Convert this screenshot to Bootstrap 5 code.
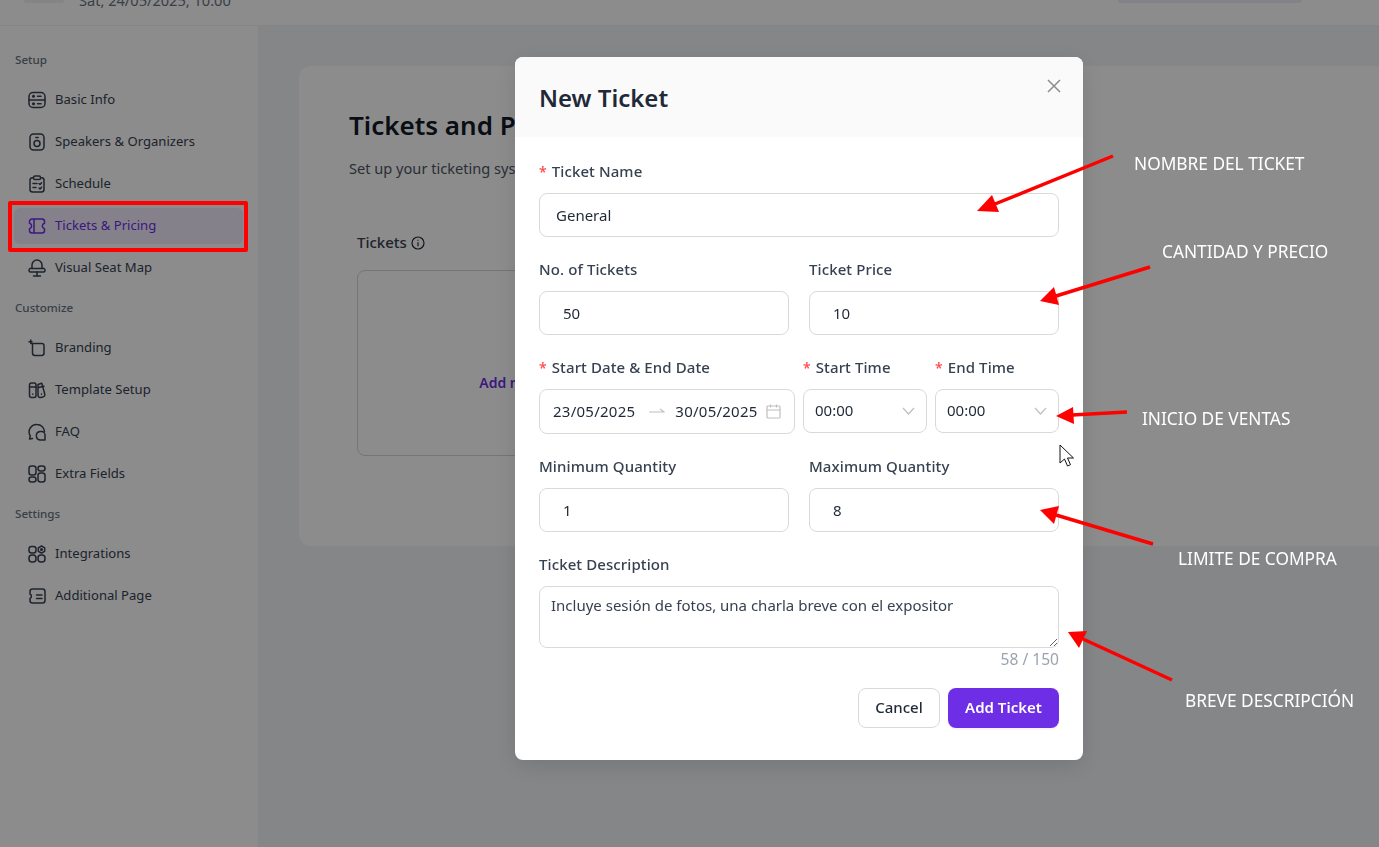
<!DOCTYPE html>
<html lang="en">
<head>
  <meta charset="UTF-8"/>
  <title>New Ticket</title>
  <link rel="stylesheet" href="https://cdn.jsdelivr.net/npm/bootstrap@5.3.0/dist/css/bootstrap.min.css"/>
  <style>
    html, body { height: 100%; overflow: hidden; }
    body { font-family: "Noto Sans", "Open Sans", sans-serif; background: #f2f4f7; color: #1f2937; }
    .app-top { height: 26px; background: #fff; border-bottom: 1px solid #f0f0f0; overflow: hidden; position: relative; }
    .app-date { margin: -11px 0 0 15px; font-size: 14.6px; color: #6b7280; line-height: 22px; }
    .app-avatar { width: 40px; height: 3px; margin-left: 24px; background: #f0f0f0; border-radius: 0 0 6px 6px; }
    .app-action { width: 184px; height: 3px; background: #f0ebfc; border-radius: 0 0 8px 8px; margin-right: 77px; }
    .app-body { height: 821px; }
    .side-col { width: 258px; background: #fff; padding: 24px 15px 0; flex-shrink: 0; }
    .side-head { font-size: 11.6px; line-height: 20px; font-weight: 500; color: #6b7280; margin-bottom: 12px; }
    .side-link { height: 36px; margin: 0 0 6px -1px; width: 229px; padding-left: 14px; border-radius: 6px; display: flex; align-items: center; gap: 9px; color: #374151; font-size: 13.1px; text-decoration: none; }
    .side-link svg { width: 18px; height: 18px; flex-shrink: 0; fill: none; stroke: currentColor; stroke-width: 1.5; stroke-linecap: round; stroke-linejoin: round; }
    .side-link.is-active { background: #f1ebfd; color: #6d2ee6; }
    .side-next { margin-top: 12px; }
    .main-col { flex: 1; padding: 40px 0 0 41px; min-width: 0; }
    .main-panel { height: 480px; background: #fff; border-radius: 12px 0 0 12px; padding: 42px 50px; }
    .main-title { font-size: 26px; font-weight: 600; line-height: 34px; color: #111827; margin: 0 0 16px; }
    .main-sub { font-size: 14.6px; color: #4b5563; margin: 0 0 54px; line-height: 20px; }
    .main-tickets { margin-left: 8px; }
    .main-label { font-size: 15px; font-weight: 500; color: #374151; line-height: 20px; margin-bottom: 18px; }
    .main-label svg { width: 14px; height: 14px; vertical-align: -2px; fill: none; stroke: #1f2937; stroke-width: 1.2; }
    .main-box { width: 346px; height: 186px; border: 1px solid #d1d5db; border-radius: 8px; text-align: center; padding-top: 101px; font-size: 14px; font-weight: 600; color: #6d2ee6; }
    .dim-layer { position: fixed; inset: 0; background: rgba(0, 0, 0, .45); }
    .ticket-modal { position: fixed; top: 57px; left: 515px; width: 568px; height: 703px; background: #fff; border: 0; border-radius: 8px; overflow: hidden; box-shadow: 0 6px 24px rgba(0,0,0,.12); }
    .ticket-modal .modal-header { height: 80px; padding: 2px 24px 0; background: #fafafa; border: 0; border-radius: 0; align-items: center; }
    .ticket-modal .modal-title { font-size: 24px; font-weight: 600; color: #1f2937; line-height: 32px; }
    .modal-x { position: absolute; top: 21px; right: 21px; width: 16px; height: 16px; padding: 0; border: 0; background: none; display: flex; }
    .ticket-modal .modal-body { padding: 24px 24px 0; }
    .fld-label { display: block; font-size: 15px; font-weight: 500; letter-spacing: .1px; color: #374151; line-height: 20px; margin-bottom: 12px; white-space: nowrap; }
    .fld-label b { color: #ff4d4f; font-weight: 600; margin-right: 5px; font-size: 14px; line-height: 1; }
    .fld-row { margin-bottom: 22px; }
    .fld-pair { display: grid; grid-template-columns: 250px 250px; gap: 20px; }
    .fld-box { height: 44px; border: 1px solid #d9d9d9; border-radius: 8px; padding: 0 16px 1px; font-size: 15px; color: #1f2937; box-shadow: none; }
    .fld-box.is-num { padding-left: 23px; }
    .fld-times { display: flex; gap: 8px; margin-bottom: 22px; }
    .fld-date { width: 256px; }
    .fld-time { width: 124px; }
    .date-box { height: 45px; border: 1px solid #d9d9d9; border-radius: 8px; padding: 0 13px 1px; display: flex; align-items: center; font-size: 15px; letter-spacing: .25px; color: #1f2937; }
    .date-arrow { width: 16px; height: 8px; margin: 0 10px 0 14px; flex-shrink: 0; }
    .date-cal { width: 15px; height: 15px; margin-left: auto; fill: none; stroke: #bfbfbf; stroke-width: 1.2; flex-shrink: 0; }
    .time-box { height: 44px; border: 1px solid #d9d9d9; border-radius: 8px; padding: 0 11px 1px; display: flex; align-items: center; justify-content: space-between; font-size: 15px; color: #1f2937; }
    .time-box svg { width: 13px; height: 8px; fill: none; stroke: #bfbfbf; stroke-width: 1.2; }
    .fld-area { height: 62px; border: 1px solid #d9d9d9; border-radius: 8px; padding: 7px 11px; font-size: 15px; line-height: 22px; color: #374151; box-shadow: none; resize: vertical; }
    .fld-count { text-align: right; font-size: 15.6px; line-height: 20px; color: #9ca3af; margin-top: 1px; }
    .fld-actions { display: flex; justify-content: flex-end; gap: 8px; margin-top: 19px; }
    .btn-cancel { height: 40px; width: 82px; border: 1px solid #d9d9d9; border-radius: 8px; background: #fff; font-size: 15px; font-weight: 500; color: #1f2937; padding: 0 0 1px; }
    .btn-add { height: 40px; width: 111px; border: 0; border-radius: 8px; background: #6d2ee6; font-size: 15px; font-weight: 600; color: #fff; padding: 0 0 1px; box-shadow: 0 2px 0 rgba(109,46,230,.05); }
    .mark-box { position: fixed; left: 8px; top: 201px; width: 240px; height: 51px; border: 4px solid #fe0000; border-radius: 2px; }
    .mark-arrows { position: fixed; inset: 0; width: 1379px; height: 847px; pointer-events: none; }
    .mark-note { position: fixed; color: #fff; font-size: 17.3px; line-height: 22px; white-space: nowrap; }
    .note-name { left: 1134px; top: 153px; }
    .note-price { left: 1162px; top: 241px; }
    .note-start { left: 1142px; top: 408px; }
    .note-limit { left: 1178px; top: 548px; }
    .note-desc { left: 1185px; top: 690px; }
    .mark-cursor { position: fixed; left: 1059px; top: 444px; width: 17px; height: 25px; }
  </style>
</head>
<body>
  <div class="app-top d-flex justify-content-between">
    <div class="d-flex">
      <div class="app-avatar"></div>
      <div class="app-date">Sat, 24/05/2025, 10:00</div>
    </div>
    <div class="app-action"></div>
  </div>

  <div class="app-body d-flex">
    <div class="side-col">
      <div class="side-head">Setup</div>
      <a class="side-link" href="#">
        <svg viewBox="0 0 18 18"><rect x="1" y="1.5" width="16" height="15" rx="4"/><path d="M1 9h16M9.5 5.2h3.5M9.5 12.8h3.5"/><circle cx="5.5" cy="5.2" r=".8"/><circle cx="5.5" cy="12.8" r=".8"/></svg>
        Basic Info</a>
      <a class="side-link" href="#">
        <svg viewBox="0 0 18 18"><rect x="2" y="1" width="14" height="16" rx="3.5"/><circle cx="9" cy="10.5" r="3"/><path d="M7.8 4.6h2.4"/></svg>
        Speakers &amp; Organizers</a>
      <a class="side-link" href="#">
        <svg viewBox="0 0 18 18"><path d="M5.5 2.8H4.5A2.5 2.5 0 0 0 2 5.3v9.2A2.5 2.5 0 0 0 4.5 17h9a2.5 2.5 0 0 0 2.5-2.5V5.3a2.5 2.5 0 0 0-2.5-2.500h-1"/><rect x="5.5" y="1" width="7" height="3.6" rx="1.4"/><path d="M5 8.5h4M5 12.5h3M11 8.5l1 1 1.6-1.8M11 13l1 1 1.6-1.8"/></svg>
        Schedule</a>
      <a class="side-link is-active" href="#">
        <svg viewBox="0 0 18 18"><path d="M4 2h10a2.5 2.5 0 0 1 2.5 2.5v1.700a2.900 2.900 0 0 0 0 5.600v1.700A2.500 2.500 0 0 1 14 16H4a2.500 2.500 0 0 1-2.500-2.500v-1.700a2.900 2.900 0 0 0 0-5.600V4.500A2.500 2.500 0 0 1 4 2zM6 2v14"/></svg>
        Tickets &amp; Pricing</a>
      <a class="side-link" href="#">
        <svg viewBox="0 0 18 18"><path d="M4 9.500V6a5 5 0 0 1 10 0v3.500"/><path d="M3.500 9.500A1.700 1.700 0 0 0 1 11v.5A1.500 1.500 0 0 0 2.500 13h13a1.500 1.500 0 0 0 1.500-1.500V11a1.700 1.700 0 0 0-2.500-1.500z"/><path d="M9 13v4M5.500 17h7"/></svg>
        Visual Seat Map</a>

      <div class="side-head side-next">Customize</div>
      <a class="side-link" href="#">
        <svg viewBox="0 0 18 18"><path d="M3.500 4.500h10a2 2 0 0 1 2.500 2v7.500a2.500 2.500 0 0 1-2.500 2.500H7a2.500 2.500 0 0 1-2.500-2.500V4.500"/><path d="M1 2.800h3M2.800 1v3.500"/></svg>
        Branding</a>
      <a class="side-link" href="#">
        <svg viewBox="0 0 18 18"><rect x="1.500" y="2" width="6.500" height="14.500" rx="2"/><path d="M10 3.500l3.800-1.200 3 11a2.300 2.300 0 0 1-2 2.700l-2 .4A2.200 2.200 0 0 1 10 14.500z"/><path d="M1.500 6h6.500M10.500 6.500l5.500-1.300M4.800 13v.2M13.500 13v.2"/></svg>
        Template Setup</a>
      <a class="side-link" href="#">
        <svg viewBox="0 0 18 18"><path d="M4.500 15.500l-3 .5.800-3A7.500 7.500 0 0 1 9 1.500a7.500 7.500 0 0 1 7.500 7"/><path d="M12 8.500h1.500a3.500 3.500 0 0 1 3.500 3.500v5h-5a4.300 4.300 0 0 1 0-8.500z"/></svg>
        FAQ</a>
      <a class="side-link" href="#">
        <svg viewBox="0 0 18 18"><rect x="1" y="1" width="7" height="9" rx="2.500"/><rect x="10" y="1" width="7" height="5" rx="2.500"/><rect x="1" y="12" width="7" height="5" rx="2.500"/><rect x="10" y="8" width="7" height="9" rx="2.500"/></svg>
        Extra Fields</a>

      <div class="side-head side-next">Settings</div>
      <a class="side-link" href="#">
        <svg viewBox="0 0 18 18"><rect x="1" y="1.500" width="7" height="6.500" rx="2.500"/><path d="M13.500 1l3.200 1.800v3.500L13.500 8l-3.200-1.700V2.800z"/><circle cx="13.500" cy="4.500" r=".8"/><rect x="1" y="10" width="7" height="7" rx="3"/><rect x="10" y="10" width="7" height="7" rx="3"/></svg>
        Integrations</a>
      <a class="side-link" href="#">
        <svg viewBox="0 0 18 18"><path d="M4.500 2h10A2.500 2.500 0 0 1 17 4.500v9a2.500 2.500 0 0 1-2.500 2.500h-10A2.500 2.500 0 0 1 2 13.500v-2a2.500 2.500 0 0 0 0-4.500V4.500A2.500 2.500 0 0 1 4.500 2z"/><path d="M8.500 8h5.500M8.500 11.500h5.500"/></svg>
        Additional Page</a>
    </div>

    <div class="main-col">
      <div class="main-panel">
        <h1 class="main-title">Tickets and Pricing</h1>
        <p class="main-sub">Set up your ticketing system for your event.</p>
        <div class="main-tickets">
          <div class="main-label">Tickets <svg viewBox="0 0 14 14"><circle cx="7" cy="7" r="6"/><path d="M7 6.300v4M7 3.800v1"/></svg></div>
          <div class="main-box">Add new ticket</div>
        </div>
      </div>
    </div>
  </div>

  <div class="dim-layer"></div>

  <div class="modal-content ticket-modal">
    <div class="modal-header">
      <h5 class="modal-title">New Ticket</h5>
      <button class="modal-x" type="button" aria-label="Close">
        <svg width="16" height="16" viewBox="0 0 16 16" fill="none" stroke="#8c8c8c" stroke-width="1.500"><path d="M2 2l12 12M14 2L2 14"/></svg>
      </button>
    </div>
    <div class="modal-body">
      <div class="fld-row">
        <label class="fld-label"><b>*</b>Ticket Name</label>
        <input class="form-control fld-box" value="General"/>
      </div>
      <div class="fld-pair fld-row">
        <div>
          <label class="fld-label">No. of Tickets</label>
          <input class="form-control fld-box is-num" value="50"/>
        </div>
        <div>
          <label class="fld-label">Ticket Price</label>
          <input class="form-control fld-box is-num" value="10"/>
        </div>
      </div>
      <div class="fld-times">
        <div class="fld-date">
          <label class="fld-label"><b>*</b>Start Date &amp; End Date</label>
          <div class="date-box">
            <span>23/05/2025</span>
            <svg class="date-arrow" viewBox="0 0 16 8" fill="none" stroke="#bfbfbf" stroke-width="1.100"><path d="M0 5h15L11 2"/></svg>
            <span>30/05/2025</span>
            <svg class="date-cal" viewBox="0 0 15 15"><rect x="1" y="2" width="13" height="12" rx="1"/><path d="M1 6h13M4.500 .5v3M10.500 .5v3"/></svg>
          </div>
        </div>
        <div class="fld-time">
          <label class="fld-label"><b>*</b>Start Time</label>
          <div class="time-box"><span>00:00</span><svg viewBox="0 0 13 8"><path d="M1 1l5.500 6L12 1"/></svg></div>
        </div>
        <div class="fld-time">
          <label class="fld-label"><b>*</b>End Time</label>
          <div class="time-box"><span>00:00</span><svg viewBox="0 0 13 8"><path d="M1 1l5.500 6L12 1"/></svg></div>
        </div>
      </div>
      <div class="fld-pair fld-row">
        <div>
          <label class="fld-label">Minimum Quantity</label>
          <input class="form-control fld-box is-num" value="1"/>
        </div>
        <div>
          <label class="fld-label">Maximum Quantity</label>
          <input class="form-control fld-box is-num" value="8"/>
        </div>
      </div>
      <label class="fld-label">Ticket Description</label>
      <textarea class="form-control fld-area">Incluye sesión de fotos, una charla breve con el expositor</textarea>
      <div class="fld-count">58 / 150</div>
      <div class="fld-actions">
        <button class="btn btn-cancel" type="button">Cancel</button>
        <button class="btn btn-add" type="button">Add Ticket</button>
      </div>
    </div>
  </div>

  <div class="mark-box"></div>

  <svg class="mark-arrows" viewBox="0 0 1379 847" fill="none" stroke="#fe0000" stroke-width="3.500">
    <path d="M1113 156L995 204M1150 267L1056 296M1127 412L1072 415M1153 544L1056 515M1172 680L1083 639"/>
    <g fill="#fe0000" stroke="none">
      <polygon points="977,211 992,195 999,212"/>
      <polygon points="1040,301 1054,287 1059,305"/>
      <polygon points="1056,416 1073,407 1074,424"/>
      <polygon points="1040,510 1059,506 1054,524"/>
      <polygon points="1068,632 1087,631 1079,648"/>
    </g>
  </svg>

  <div class="mark-note note-name">NOMBRE DEL TICKET</div>
  <div class="mark-note note-price">CANTIDAD Y PRECIO</div>
  <div class="mark-note note-start">INICIO DE VENTAS</div>
  <div class="mark-note note-limit">LIMITE DE COMPRA</div>
  <div class="mark-note note-desc">BREVE DESCRIPCIÓN</div>

  <svg class="mark-cursor" viewBox="0 0 17 25"><path d="M1 1v18l4.500-4 3 7 3-1.300-3-6.700h6z" fill="#fff" stroke="#111" stroke-width="1"/></svg>

  <script src="https://cdn.jsdelivr.net/npm/bootstrap@5.3.0/dist/js/bootstrap.bundle.min.js"></script>
</body>
</html>
